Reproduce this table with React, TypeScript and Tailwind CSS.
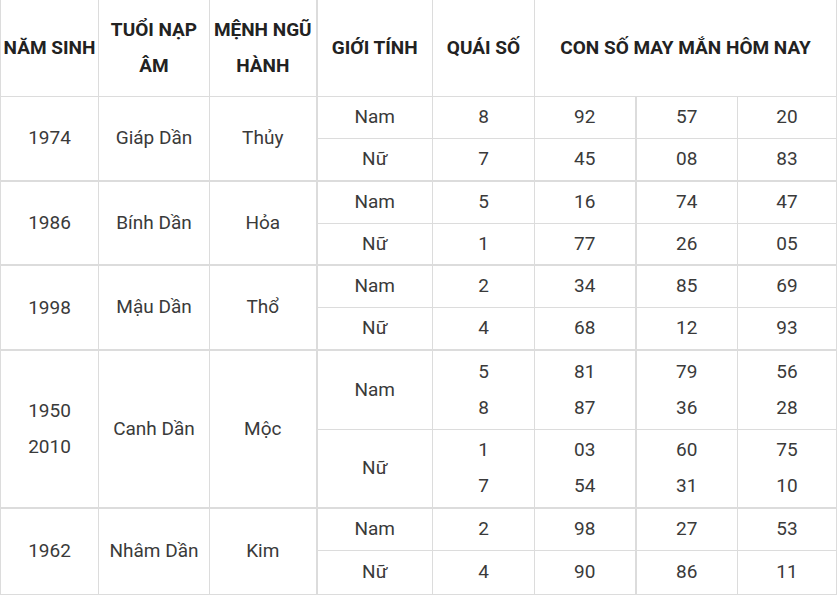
const groups = [
  {
    year: ["1974"],
    tuoi: "Giáp Dần",
    menh: "Thủy",
    rows: [
      { gt: "Nam", qs: ["8"], nums: [["92"], ["57"], ["20"]], h: "h-[42px]" },
      { gt: "Nữ", qs: ["7"], nums: [["45"], ["08"], ["83"]], h: "h-[43px]" },
    ],
  },
  {
    year: ["1986"],
    tuoi: "Bính Dần",
    menh: "Hỏa",
    rows: [
      { gt: "Nam", qs: ["5"], nums: [["16"], ["74"], ["47"]], h: "h-[42px]" },
      { gt: "Nữ", qs: ["1"], nums: [["77"], ["26"], ["05"]], h: "h-[42px]" },
    ],
  },
  {
    year: ["1998"],
    tuoi: "Mậu Dần",
    menh: "Thổ",
    rows: [
      { gt: "Nam", qs: ["2"], nums: [["34"], ["85"], ["69"]], h: "h-[42px]" },
      { gt: "Nữ", qs: ["4"], nums: [["68"], ["12"], ["93"]], h: "h-[43px]" },
    ],
  },
  {
    year: ["1950", "2010"],
    tuoi: "Canh Dần",
    menh: "Mộc",
    rows: [
      { gt: "Nam", qs: ["5", "8"], nums: [["81", "87"], ["79", "36"], ["56", "28"]], h: "h-[79px]" },
      { gt: "Nữ", qs: ["1", "7"], nums: [["03", "54"], ["60", "31"], ["75", "10"]], h: "h-[79px]" },
    ],
  },
  {
    year: ["1962"],
    tuoi: "Nhâm Dần",
    menh: "Kim",
    rows: [
      { gt: "Nam", qs: ["2"], nums: [["98"], ["27"], ["53"]], h: "h-[42px]" },
      { gt: "Nữ", qs: ["4"], nums: [["90"], ["86"], ["11"]], h: "h-[44px]" },
    ],
  },
];

const cell = "border border-[#dcdcdc] p-0 text-center align-middle";

function Lines({ items }: { items: string[] }) {
  return (
    <>
      {items.map((t, i) => (
        <div key={i} className="leading-[36px]">
          {t}
        </div>
      ))}
    </>
  );
}

export default function App() {
  return (
    <div className="bg-white" style={{ fontFamily: "Roboto, 'Liberation Sans', sans-serif" }}>
      <table className="w-[836px] table-fixed border-collapse text-[19px] text-[#3a3a3a]">
        <colgroup>
          <col className="w-[98px]" />
          <col className="w-[111px]" />
          <col className="w-[107px]" />
          <col className="w-[116px]" />
          <col className="w-[102px]" />
          <col className="w-[101px]" />
          <col className="w-[102px]" />
          <col className="w-[99px]" />
        </colgroup>
        <thead>
          <tr className="h-[96px] font-bold leading-[36px] text-[#222]">
            <th className={`${cell} border-t-0`}>NĂM SINH</th>
            <th className={`${cell} border-t-0`}>
              TUỔI NẠP
              <br />
              ÂM
            </th>
            <th className={`${cell} border-t-0 border-r-2`}>
              MỆNH NGŨ
              <br />
              HÀNH
            </th>
            <th className={`${cell} border-t-0`}>GIỚI TÍNH</th>
            <th className={`${cell} border-t-0`}>QUÁI SỐ</th>
            <th colSpan={3} className={`${cell} border-t-0`}>
              CON SỐ MAY MẮN HÔM NAY
            </th>
          </tr>
        </thead>
        <tbody>
          {groups.map((g, gi) =>
            g.rows.map((r, ri) => (
              <tr key={`${gi}-${ri}`} className={`${r.h} ${ri === 0 && gi > 0 ? "border-t-2 border-[#dcdcdc]" : ""}`}>
                {ri === 0 && (
                  <>
                    <td rowSpan={2} className={cell}>
                      <Lines items={g.year} />
                    </td>
                    <td rowSpan={2} className={cell}>
                      {g.tuoi}
                    </td>
                    <td rowSpan={2} className={`${cell} border-r-2`}>
                      {g.menh}
                    </td>
                  </>
                )}
                <td className={cell}>{r.gt}</td>
                <td className={cell}>
                  <Lines items={r.qs} />
                </td>
                <td className={`${cell} border-r-2`}>
                  <Lines items={r.nums[0]} />
                </td>
                <td className={cell}>
                  <Lines items={r.nums[1]} />
                </td>
                <td className={cell}>
                  <Lines items={r.nums[2]} />
                </td>
              </tr>
            ))
          )}
        </tbody>
      </table>
    </div>
  );
}
